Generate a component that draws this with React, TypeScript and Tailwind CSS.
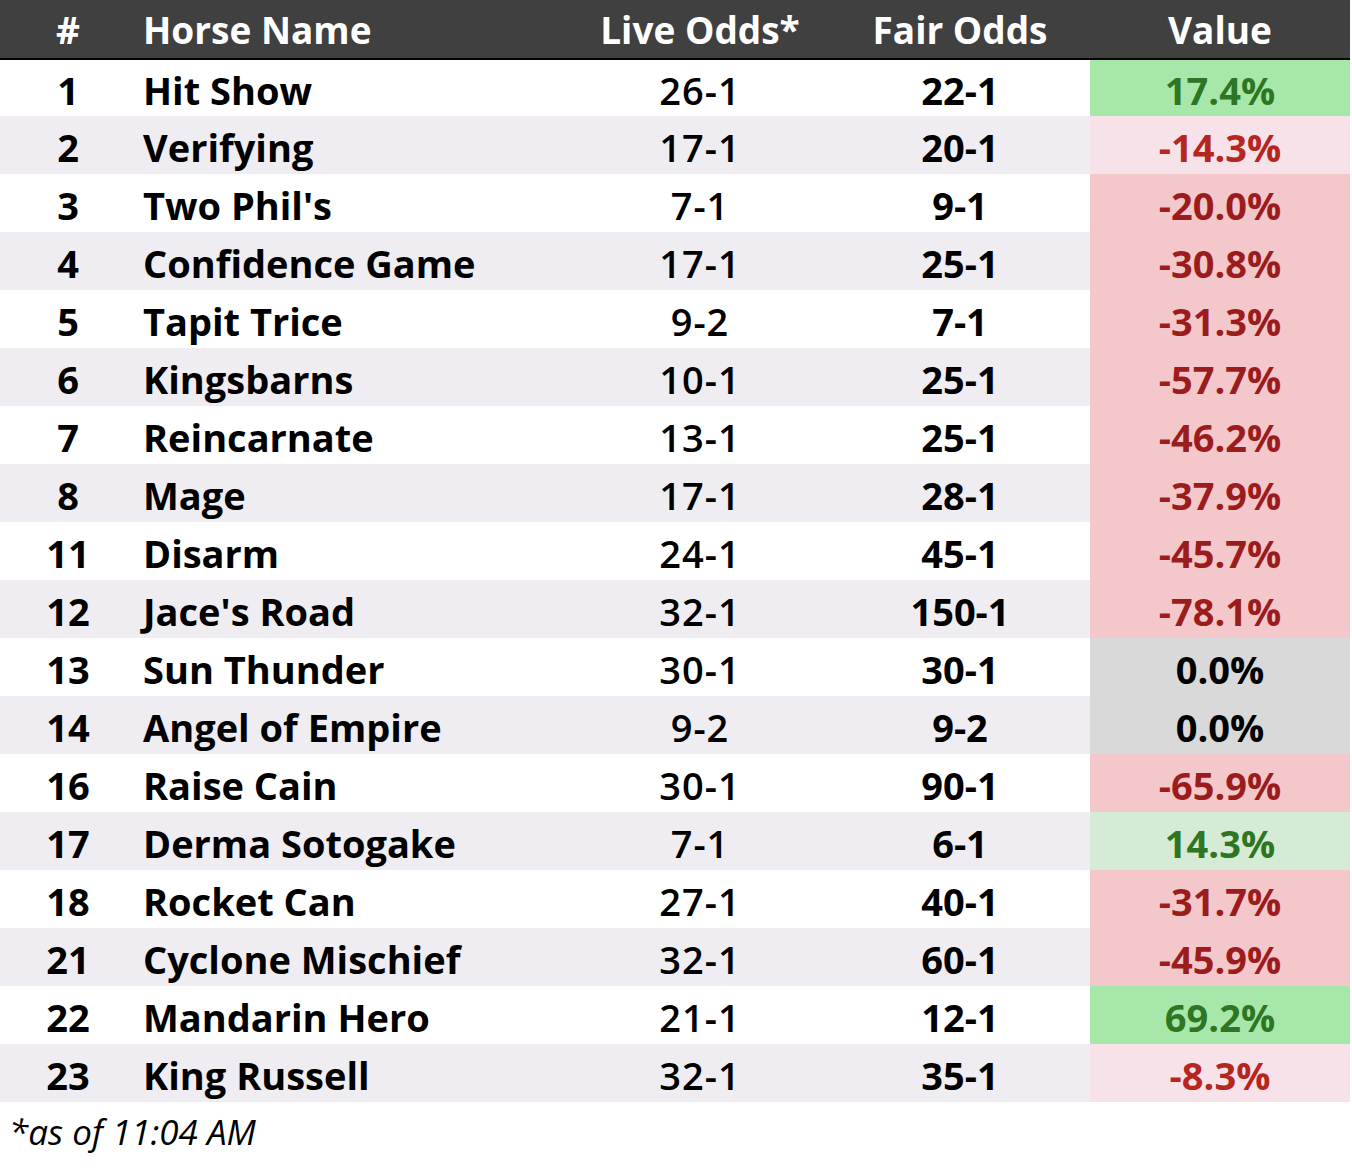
import React from "react"

type Tone = "green" | "lightGreen" | "pink" | "lightPink" | "gray"

const rows: [string, string, string, string, string, Tone][] = [
  ["1", "Hit Show", "26-1", "22-1", "17.4%", "green"],
  ["2", "Verifying", "17-1", "20-1", "-14.3%", "lightPink"],
  ["3", "Two Phil's", "7-1", "9-1", "-20.0%", "pink"],
  ["4", "Confidence Game", "17-1", "25-1", "-30.8%", "pink"],
  ["5", "Tapit Trice", "9-2", "7-1", "-31.3%", "pink"],
  ["6", "Kingsbarns", "10-1", "25-1", "-57.7%", "pink"],
  ["7", "Reincarnate", "13-1", "25-1", "-46.2%", "pink"],
  ["8", "Mage", "17-1", "28-1", "-37.9%", "pink"],
  ["11", "Disarm", "24-1", "45-1", "-45.7%", "pink"],
  ["12", "Jace's Road", "32-1", "150-1", "-78.1%", "pink"],
  ["13", "Sun Thunder", "30-1", "30-1", "0.0%", "gray"],
  ["14", "Angel of Empire", "9-2", "9-2", "0.0%", "gray"],
  ["16", "Raise Cain", "30-1", "90-1", "-65.9%", "pink"],
  ["17", "Derma Sotogake", "7-1", "6-1", "14.3%", "lightGreen"],
  ["18", "Rocket Can", "27-1", "40-1", "-31.7%", "pink"],
  ["21", "Cyclone Mischief", "32-1", "60-1", "-45.9%", "pink"],
  ["22", "Mandarin Hero", "21-1", "12-1", "69.2%", "green"],
  ["23", "King Russell", "32-1", "35-1", "-8.3%", "lightPink"],
]

const toneClass: Record<Tone, string> = {
  green: "bg-[#a7e8aa] text-[#2e7623]",
  lightGreen: "bg-[#d5ebd5] text-[#2e7623]",
  pink: "bg-[#f4c7cb] text-[#9a1c1c]",
  lightPink: "bg-[#f8e2ea] text-[#b5261e]",
  gray: "bg-[#d9d9d9] text-black",
}

const grid = "grid grid-cols-[136px_434px_260px_260px_260px]"

export default function App() {
  return (
    <div className="w-[1352px] min-h-[1168px] bg-white font-['Open_Sans','Liberation_Sans',sans-serif] text-black">
      <div className="w-[1350px]">
        <div className={`${grid} h-[60px] bg-[#404040] border-b-2 border-black text-white font-bold text-[37px] leading-none items-center`}>
          <div className="text-center">#</div>
          <div className="pl-[7px]">Horse Name</div>
          <div className="text-center">Live Odds*</div>
          <div className="text-center">Fair Odds</div>
          <div className="text-center">Value</div>
        </div>
        {rows.map(([num, name, live, fair, value, tone], i) => (
          <div
            key={num}
            className={`${grid} ${i === 0 ? "h-[56px]" : "h-[58px]"} text-[38px] leading-none ${i % 2 === 1 ? "bg-[#efedf2]" : "bg-white"}`}
          >
            <div className="flex items-center justify-center pt-[4px] font-bold">{num}</div>
            <div className="flex items-center pl-[7px] pt-[4px] font-bold">{name}</div>
            <div className="flex items-center justify-center pt-[4px] font-semibold tracking-[1px]">{live}</div>
            <div className="flex items-center justify-center pt-[4px] font-bold">{fair}</div>
            <div className={`flex items-center justify-center pt-[4px] font-bold ${toneClass[tone]}`}>{value}</div>
          </div>
        ))}
        <div className="pl-[9px] pt-[12px] italic text-[35px] leading-none">*as of 11:04 AM</div>
      </div>
    </div>
  )
}
